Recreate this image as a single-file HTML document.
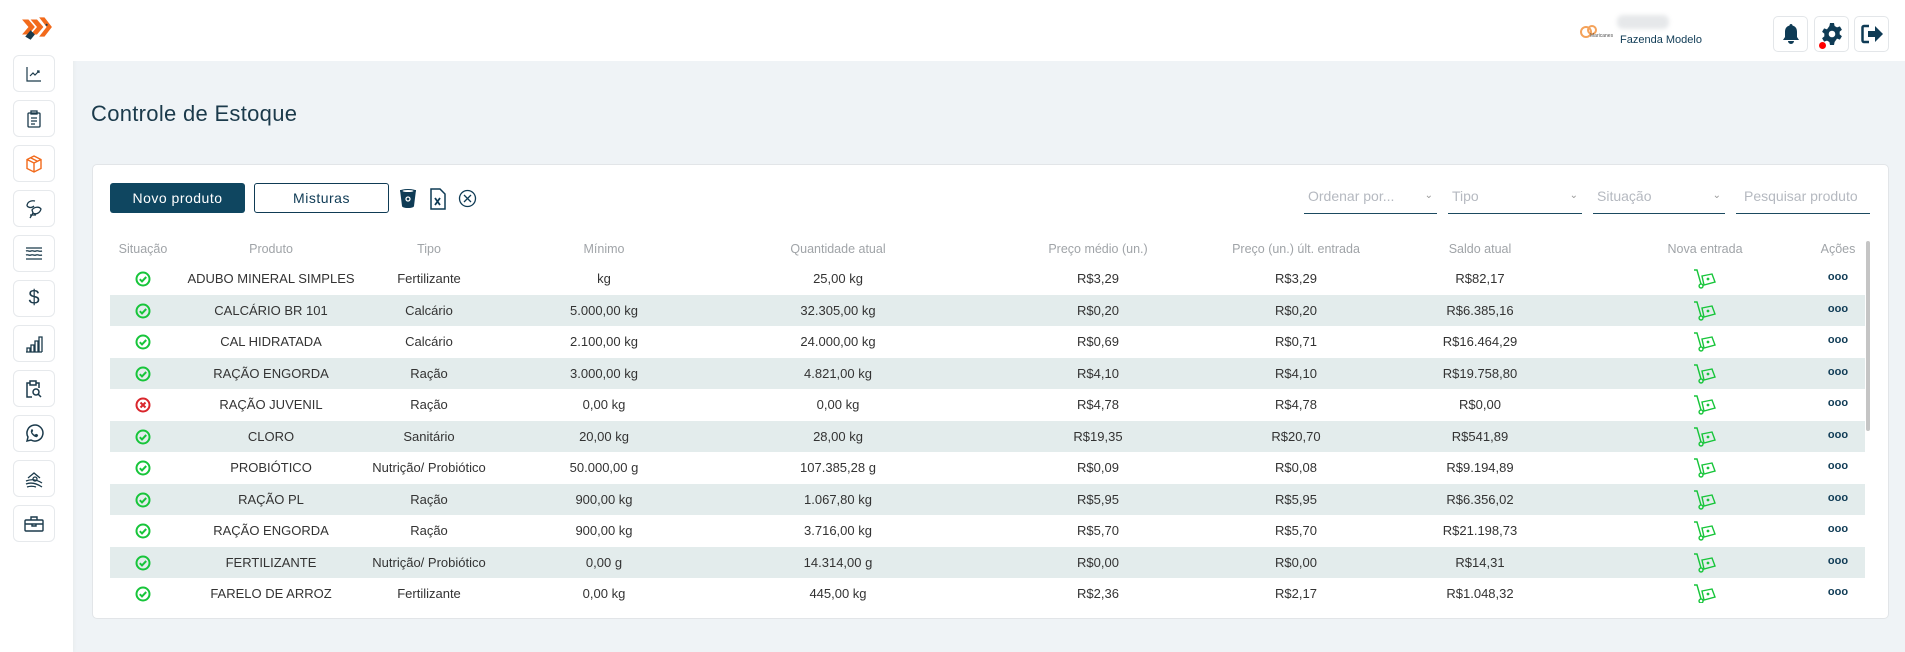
<!DOCTYPE html>
<html><head><meta charset="utf-8"><style>
*{margin:0;padding:0;box-sizing:border-box}
body{width:1905px;height:652px;background:#eff3f6;font-family:"Liberation Sans",sans-serif;position:relative;overflow:hidden;color:#333}
.side{position:absolute;left:0;top:0;width:73px;height:652px;background:#fff;box-shadow:1px 0 4px rgba(0,0,0,.04)}
.sb{position:absolute;left:13px;width:42px;height:37px;border:1px solid #e6e9ec;border-radius:6px;background:#fff;display:flex;align-items:center;justify-content:center}
.top{position:absolute;left:73px;top:0;right:0;height:61px;background:#fff}
h1{position:absolute;left:91px;top:101px;font-size:22px;font-weight:400;color:#1b3a4b;letter-spacing:.3px}
.card{position:absolute;left:92px;top:164px;width:1797px;height:455px;background:#fff;border:1px solid #e2e5e8;border-radius:5px}
.btn{position:absolute;top:183px;height:30px;width:135px;border-radius:3px;font-size:14px;display:flex;align-items:center;justify-content:center;letter-spacing:.5px}
.f{position:absolute;top:184px;height:30px;border-bottom:1.5px solid #1b4a60;color:#b5b9c0;font-size:14px;padding:4px 4px}
.f i{position:absolute;right:4px;top:6px;font-style:normal;font-size:10px;color:#999}
.row{position:absolute;left:110px;width:1755px;height:31.5px}
.row.s{background:#e3ecec}
.c{position:absolute;width:240px;margin-left:-120px;text-align:center;top:8px;font-size:13px;color:#333}
.hd .c{color:#a0a4a8;font-size:12.5px}
.ib{position:absolute;top:16px;width:35px;height:36px;border:1px solid #e3e6e9;border-radius:5px;display:flex;align-items:center;justify-content:center;background:#fff}
</style></head><body>
<div class="side">
<svg style="position:absolute;left:21px;top:13px" width="32" height="28" viewBox="0 0 30 26"><path d="M1 6h6l6 7-6 7H1l6-7z" fill="#f26a1b"/><path d="M9 6h6l6 7-6 7H9l6-7z" fill="#f26a1b"/><path d="M17 4h5l7 9-7 9h-5l7-9z" fill="#f26a1b"/><path d="M4 22l5-6 4 4-4 5z" fill="#1b3a4b"/><circle cx="24" cy="11" r="1" fill="#1b3a4b"/></svg>
<div class="sb" style="top:55px"><svg width="18" height="18" viewBox="0 0 18 18" fill="none" stroke="#1b3a4b" stroke-width="1.2"><path d="M2 2v14h14M5 11l3-3 2 2 4-4M12 6h2v2"/></svg></div>
<div class="sb" style="top:100px"><svg width="16" height="18" viewBox="0 0 16 18" fill="none" stroke="#1b3a4b" stroke-width="1.3"><rect x="2" y="3" width="12" height="14" rx="1"/><rect x="5" y="1" width="6" height="3"/><path d="M5 8h6M5 11h6M5 14h4"/></svg></div>
<div class="sb" style="top:145px"><svg width="20" height="20" viewBox="0 0 20 20" fill="none" stroke="#f26a1b" stroke-width="1.4"><path d="M10 2l7 3.5v9L10 18l-7-3.5v-9z M3 5.5L10 9l7-3.5M10 9v9M6.5 3.8l7 3.5"/></svg></div>
<div class="sb" style="top:190px"><svg width="20" height="22" viewBox="0 0 20 22" fill="none" stroke="#1b3a4b" stroke-width="1.3"><path d="M3 8c0-4 4-6 8-5M3 8c2 2 5 2 7 0M8 12c2-3 7-4 9-1-1 4-5 6-8 4zM9 15l-3 5M6 17h6"/></svg></div>
<div class="sb" style="top:235px"><svg width="20" height="16" viewBox="0 0 20 16" fill="none" stroke="#1b3a4b" stroke-width="1.3"><path d="M2 2h16M2 5c2-1 3 1 5 0s3 1 5 0 3 1 6 0M2 9c2-1 3 1 5 0s3 1 5 0 3 1 6 0M2 13h16"/></svg></div>
<div class="sb" style="top:280px;font-size:20px;color:#1b3a4b">$</div>
<div class="sb" style="top:325px"><svg width="18" height="18" viewBox="0 0 18 18" fill="none" stroke="#1b3a4b" stroke-width="1.3"><path d="M1 17h16M2 17v-4h3v4M6 17V10h3v7M10 17V6h3v11M14 17V2h3v15"/></svg></div>
<div class="sb" style="top:370px"><svg width="18" height="18" viewBox="0 0 18 18" fill="none" stroke="#1b3a4b" stroke-width="1.5"><path d="M7 17H2V3h3M11 3h3v5M5 1h6v4H5z"/><circle cx="11" cy="12" r="3"/><path d="M13 14l3 3"/></svg></div>
<div class="sb" style="top:415px"><svg width="20" height="20" viewBox="0 0 20 20" fill="none" stroke="#1b3a4b" stroke-width="1.5"><path d="M3 17l1-4a8 8 0 1 1 3 3z"/><path d="M7 7c0 3 3 6 6 6l1-2-2-1-1 1c-1 0-3-2-3-3l1-1-1-2z" fill="#1b3a4b" stroke-width=".5"/></svg></div>
<div class="sb" style="top:460px"><svg width="20" height="18" viewBox="0 0 20 18" fill="none" stroke="#1b3a4b" stroke-width="1.3"><path d="M4 8l6-5 6 5M2 11c5-2 10-2 16 2M2 14c5-2 10-1 16 3M3 17c3-1 6-1 9 0"/><circle cx="11" cy="9" r="2"/></svg></div>
<div class="sb" style="top:505px"><svg width="20" height="16" viewBox="0 0 20 16" fill="none" stroke="#1b3a4b" stroke-width="1.4"><rect x="1" y="4" width="18" height="11" rx="1"/><path d="M7 4V1h6v3M1 8h18M8 8v2h4V8"/></svg></div>
</div>
<div class="top"></div>
<svg style="position:absolute;left:1580px;top:24px" width="36" height="16" viewBox="0 0 36 16"><circle cx="6" cy="8" r="5" fill="none" stroke="#f4a25a" stroke-width="2"/><circle cx="12" cy="6" r="4" fill="none" stroke="#f4a25a" stroke-width="2"/><text x="10" y="13" font-size="5" fill="#555" font-family="Liberation Sans">Maricanes</text></svg>
<div style="position:absolute;left:1617px;top:15px;width:52px;height:14px;background:#e6e8ea;border-radius:6px;filter:blur(2px)"></div>
<div style="position:absolute;left:1620px;top:34px;font-size:11px;color:#0f3b55">Fazenda Modelo</div>
<div class="ib" style="left:1773px"><svg width="20" height="22" viewBox="0 0 20 22"><path d="M10 1c1 0 1.5.7 1.5 1.5C15 3.5 16 6 16 9v5l2 3H2l2-3V9c0-3 1-5.5 4.5-6.5C8.5 1.7 9 1 10 1zM7 18h6a3 3 0 0 1-6 0z" fill="#0f3b55"/></svg></div>
<div class="ib" style="left:1814px"><svg width="24" height="24" viewBox="0 0 24 24"><path fill="#0f3b55" d="M10 1h4l.6 3 2.4 1.4 2.9-1 2 3.4-2.3 2a7 7 0 0 1 0 2.4l2.3 2-2 3.4-2.9-1L14.6 20 14 23h-4l-.6-3-2.4-1.4-2.9 1-2-3.4 2.3-2a7 7 0 0 1 0-2.4l-2.3-2 2-3.4 2.9 1L9.4 4z"/><circle cx="12" cy="12" r="3.3" fill="#fff"/></svg><div style="position:absolute;left:4px;top:25px;width:7px;height:7px;border-radius:50%;background:#f00"></div></div>
<div class="ib" style="left:1854px"><svg width="24" height="22" viewBox="0 0 24 22" fill="none"><path d="M9 3H4a1.5 1.5 0 0 0-1.5 1.5v13A1.5 1.5 0 0 0 4 19h5" stroke="#0f3b55" stroke-width="2.5"/><path d="M8 8h7V3l8 8-8 8v-5H8z" fill="#0f3b55"/></svg></div>
<h1>Controle de Estoque</h1>
<div class="card"></div>
<div class="btn" style="left:110px;background:#0f4660;color:#fff">Novo produto</div>
<div class="btn" style="left:254px;border:1.3px solid #0f3b55;color:#0f3b55">Misturas</div>
<svg style="position:absolute;left:399px;top:187px" width="18" height="22" viewBox="0 0 18 22"><path d="M1 3h16l-2 16c0 1-2 2-6 2s-6-1-6-2z" fill="#0f3b55"/><ellipse cx="9" cy="4" rx="8" ry="2" fill="#0f3b55"/><ellipse cx="9" cy="4" rx="5.5" ry="1" fill="#fff"/><circle cx="9" cy="12" r="2" fill="none" stroke="#fff" stroke-width="1.3"/></svg>
<svg style="position:absolute;left:429px;top:188px" width="18" height="22" viewBox="0 0 18 22" fill="none" stroke="#0f3b55" stroke-width="1.5"><path d="M2 1h9l5 5v15H2z"/><path d="M6 10l5 7M11 10l-5 7" stroke-width="1.8"/></svg>
<svg style="position:absolute;left:458px;top:189px" width="19" height="19" viewBox="0 0 19 19" fill="none" stroke="#0f3b55" stroke-width="1.3"><circle cx="9.5" cy="9.5" r="8"/><path d="M6 6l7 7M13 6l-7 7"/></svg>
<div class="f" style="left:1304px;width:133px">Ordenar por...<i>⌄</i></div>
<div class="f" style="left:1448px;width:134px">Tipo<i>⌄</i></div>
<div class="f" style="left:1593px;width:132px">Situação<i>⌄</i></div>
<div class="f" style="left:1736px;width:134px;padding-left:8px">Pesquisar produto</div>
<div style="position:absolute;left:1866px;top:241px;width:4px;height:190px;background:#c5c5c5;border-radius:2px"></div>
<div style="position:absolute;left:0;top:0;width:1905px;height:603px;overflow:hidden">
<div class="row hd" style="top:234px">
<div class="c" style="left:33px">Situação</div><div class="c" style="left:161px">Produto</div><div class="c" style="left:319px">Tipo</div><div class="c" style="left:494px">Mínimo</div><div class="c" style="left:728px">Quantidade atual</div><div class="c" style="left:988px">Preço médio (un.)</div><div class="c" style="left:1186px">Preço (un.) últ. entrada</div><div class="c" style="left:1370px">Saldo atual</div><div class="c" style="left:1595px">Nova entrada</div><div class="c" style="left:1728px">Ações</div>
</div>
<div id="rows"></div>
</div>
<script>
const d=[["ADUBO MINERAL SIMPLES","Fertilizante","kg","25,00 kg","R$3,29","R$3,29","R$82,17"],
["CALCÁRIO BR 101","Calcário","5.000,00 kg","32.305,00 kg","R$0,20","R$0,20","R$6.385,16"],
["CAL HIDRATADA","Calcário","2.100,00 kg","24.000,00 kg","R$0,69","R$0,71","R$16.464,29"],
["RAÇÃO ENGORDA","Ração","3.000,00 kg","4.821,00 kg","R$4,10","R$4,10","R$19.758,80"],
["RAÇÃO JUVENIL","Ração","0,00 kg","0,00 kg","R$4,78","R$4,78","R$0,00"],
["CLORO","Sanitário","20,00 kg","28,00 kg","R$19,35","R$20,70","R$541,89"],
["PROBIÓTICO","Nutrição/ Probiótico","50.000,00 g","107.385,28 g","R$0,09","R$0,08","R$9.194,89"],
["RAÇÃO PL","Ração","900,00 kg","1.067,80 kg","R$5,95","R$5,95","R$6.356,02"],
["RAÇÃO ENGORDA","Ração","900,00 kg","3.716,00 kg","R$5,70","R$5,70","R$21.198,73"],
["FERTILIZANTE","Nutrição/ Probiótico","0,00 g","14.314,00 g","R$0,00","R$0,00","R$14,31"],
["FARELO DE ARROZ","Fertilizante","0,00 kg","445,00 kg","R$2,36","R$2,17","R$1.048,32"]];
const L=[161,319,494,728,988,1186,1370];
let h="";
d.forEach((r,i)=>{
const bad=i==4;
const ic=bad?'<svg width="16" height="16" viewBox="0 0 16 16"><circle cx="8" cy="8" r="6.5" fill="none" stroke="#d9262c" stroke-width="2"/><path d="M5.5 5.5l5 5M10.5 5.5l-5 5" stroke="#d9262c" stroke-width="2"/></svg>':'<svg width="16" height="16" viewBox="0 0 16 16"><circle cx="8" cy="8" r="6.5" fill="none" stroke="#17c53a" stroke-width="2"/><path d="M4.8 8.2l2.2 2.2 4.2-4.4" fill="none" stroke="#17c53a" stroke-width="2"/></svg>';
h+=`<div class="row${i%2?' s':''}" style="top:${263+i*31.5}px"><div class="c" style="left:33px;top:8px">${ic}</div>`;
r.forEach((t,j)=>h+=`<div class="c" style="left:${L[j]}px">${t}</div>`);
h+=`<div class="c" style="left:1595px;top:6px"><svg width="24" height="20" viewBox="0 0 24 20" fill="none" stroke="#17c53a" stroke-width="1.4"><path d="M1 1h3l4 14M8 15a2 2 0 1 0 .1 0"/><path d="M9 7l10-2 3 8-11 3z"/><circle cx="15" cy="10" r=".7" fill="#17c53a"/></svg></div><div class="c" style="left:1728px;top:8px;font-weight:bold;color:#0f3b55;font-size:11px;letter-spacing:0">ooo</div></div>`;
});
document.getElementById("rows").innerHTML=h;
</script>
</body></html>
